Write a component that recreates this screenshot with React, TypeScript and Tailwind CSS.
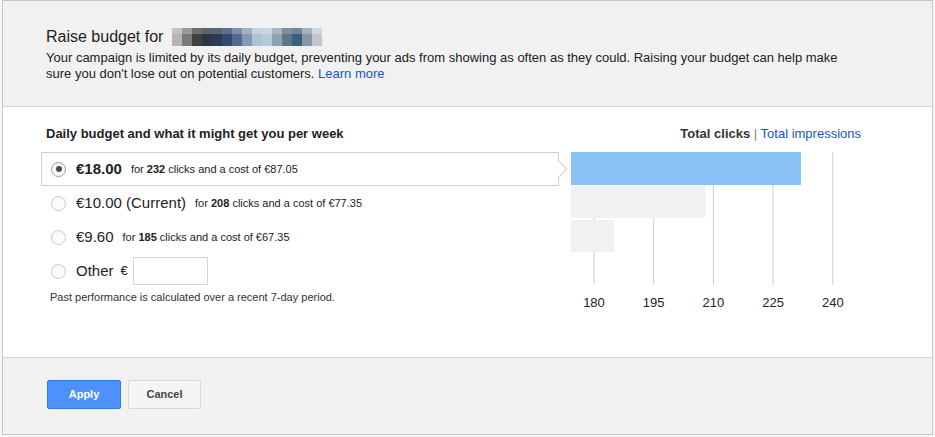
import React, { useState } from 'react';

const font = { fontFamily: '"Liberation Sans", Arial, sans-serif' };

const blurTop = ['#c4c4c4', '#9a9a9a', '#6e6e6e', '#5f6670', '#5a6478', '#5f7090', '#7d8fae', '#a1b2c6', '#c3d2de', '#cbd6df', '#a9b7c3', '#7d8fa0', '#6f8698', '#a4b0bb', '#d1d6da'];
const blurBottom = ['#b5b5b5', '#7a7a7a', '#404040', '#2f3444', '#2c3a55', '#324b73', '#54698f', '#8597b4', '#aec2d4', '#b7cad7', '#8fa2b2', '#5f7588', '#3e5d78', '#8796a8', '#c0c7cd'];

const options = [
  { id: 'a', amount: '€18.00', clicks: 232, cost: '€87.05' },
  { id: 'b', amount: '€10.00 (Current)', clicks: 208, cost: '€77.35' },
  { id: 'c', amount: '€9.60', clicks: 185, cost: '€67.35' },
];

function Radio({ checked }: { checked: boolean }) {
  return (
    <span className={`flex h-[15px] w-[15px] shrink-0 items-center justify-center rounded-full border bg-gradient-to-b from-[#f6f6f6] to-white ${checked ? 'border-[#9a9a9a]' : 'border-[#c8c8c8]'}`}>
      {checked && <span className="h-[6px] w-[6px] rounded-full bg-[#4a4a4a]" />}
    </span>
  );
}

function Chart() {
  const x = (v: number) => 23 + (v - 180) * 3.98;
  const ticks = [180, 195, 210, 225, 240];
  const bars = [
    { v: 232, y: 0, h: 33, c: '#88c2f6' },
    { v: 208, y: 34, h: 32, c: '#f1f1f1' },
    { v: 185, y: 68, h: 32, c: '#f1f1f1' },
  ];
  return (
    <svg width="290" height="165" className="block">
      {ticks.map((t) => (
        <line key={t} x1={x(t)} x2={x(t)} y1={0} y2={133} stroke="#cccccc" strokeWidth="1" />
      ))}
      {bars.map((b) => (
        <rect key={b.v} x={0} y={b.y} width={x(b.v)} height={b.h} fill={b.c} />
      ))}
      {ticks.map((t) => (
        <text key={t} x={x(t)} y={155} textAnchor="middle" fontSize="13" fill="#222" style={font}>
          {t}
        </text>
      ))}
    </svg>
  );
}

export default function App() {
  const [selected, setSelected] = useState('a');
  return (
    <div className="h-[437px] w-[935px] bg-[#f7f7f7] px-[2px]" style={font}>
      <div className="flex w-[931px] flex-col border border-[#c6c6c6] bg-white text-[#222]">
        <div className="h-[106px] border-b border-[#d2d2d2] bg-[#f1f1f1] pl-[43px] pt-[26px]">
          <div className="flex items-center text-[16px] leading-[20px]">
            <span>Raise budget for</span>
            <span className="ml-[9px] flex flex-col">
              <span className="flex">
                {blurTop.map((c, i) => (
                  <span key={i} className="h-[6px] w-[10px]" style={{ background: c }} />
                ))}
              </span>
              <span className="flex">
                {blurBottom.map((c, i) => (
                  <span key={i} className="h-[12px] w-[10px]" style={{ background: c }} />
                ))}
              </span>
            </span>
          </div>
          <p className="mt-[3px] w-[800px] text-[13px] leading-[16px]">
            Your campaign is limited by its daily budget, preventing your ads from showing as often as they could. Raising your budget can help make sure you don't lose out on potential customers.{' '}
            <a className="text-[#1a55c4]">Learn more</a>
          </p>
        </div>

        <div className="flex h-[251px] border-b border-[#d2d2d2] pl-[38px] pt-[19px]">
          <div className="w-[518px]">
            <div className="pl-[5px] text-[13px] font-bold leading-[16px] text-[#222]">Daily budget and what it might get you per week</div>
            <div className="mt-[10px] flex flex-col">
              {options.map((o) => {
                const on = selected === o.id;
                return (
                  <div
                    key={o.id}
                    onClick={() => setSelected(o.id)}
                    className={`relative flex h-[34px] cursor-pointer items-center border pl-[9px] ${on ? 'border-[#cfcfcf]' : 'border-transparent'}`}
                  >
                    <Radio checked={on} />
                    <span className={`ml-[10px] text-[15px] ${o.id === 'a' ? 'font-bold' : ''}`}>{o.amount}</span>
                    <span className="ml-[9px] text-[11px] text-[#222]">
                      for <b>{o.clicks}</b> clicks and a cost of {o.cost}
                    </span>
                    {on && (
                      <span className="absolute right-[-7px] top-[10px] h-[12px] w-[12px] rotate-45 border-r border-t border-[#cfcfcf] bg-white" />
                    )}
                  </div>
                );
              })}
              <div onClick={() => setSelected('d')} className="flex h-[34px] cursor-pointer items-center pl-[10px]">
                <Radio checked={selected === 'd'} />
                <span className="ml-[10px] text-[15px]">Other</span>
                <span className="ml-[7px] text-[13px]">€</span>
                <input className="ml-[5px] h-[28px] w-[75px] border border-[#d6d6d6] bg-white outline-none" />
              </div>
            </div>
            <div className="mt-[1px] pl-[9px] text-[11px] text-[#333]">Past performance is calculated over a recent 7-day period.</div>
          </div>

          <div className="ml-[12px] flex w-[290px] flex-col">
            <div className="mb-[10px] text-right text-[13px] leading-[16px]">
              <span className="font-bold text-[#333]">Total clicks</span>
              <span className="text-[#6b8a6b]"> | </span>
              <a className="text-[#1a55c4]">Total impressions</a>
            </div>
            <Chart />
          </div>
        </div>

        <div className="flex h-[76px] gap-[7px] bg-[#f1f1f1] pl-[44px] pt-[22px]">
          <button className="h-[29px] w-[74px] rounded-[2px] border border-[#3079ed] bg-[#4d90fe] text-[11px] font-bold text-white">Apply</button>
          <button className="h-[29px] w-[73px] rounded-[2px] border border-[#d9d9d9] bg-[#f5f5f5] text-[11px] font-bold text-[#444]">Cancel</button>
        </div>
      </div>
    </div>
  );
}
